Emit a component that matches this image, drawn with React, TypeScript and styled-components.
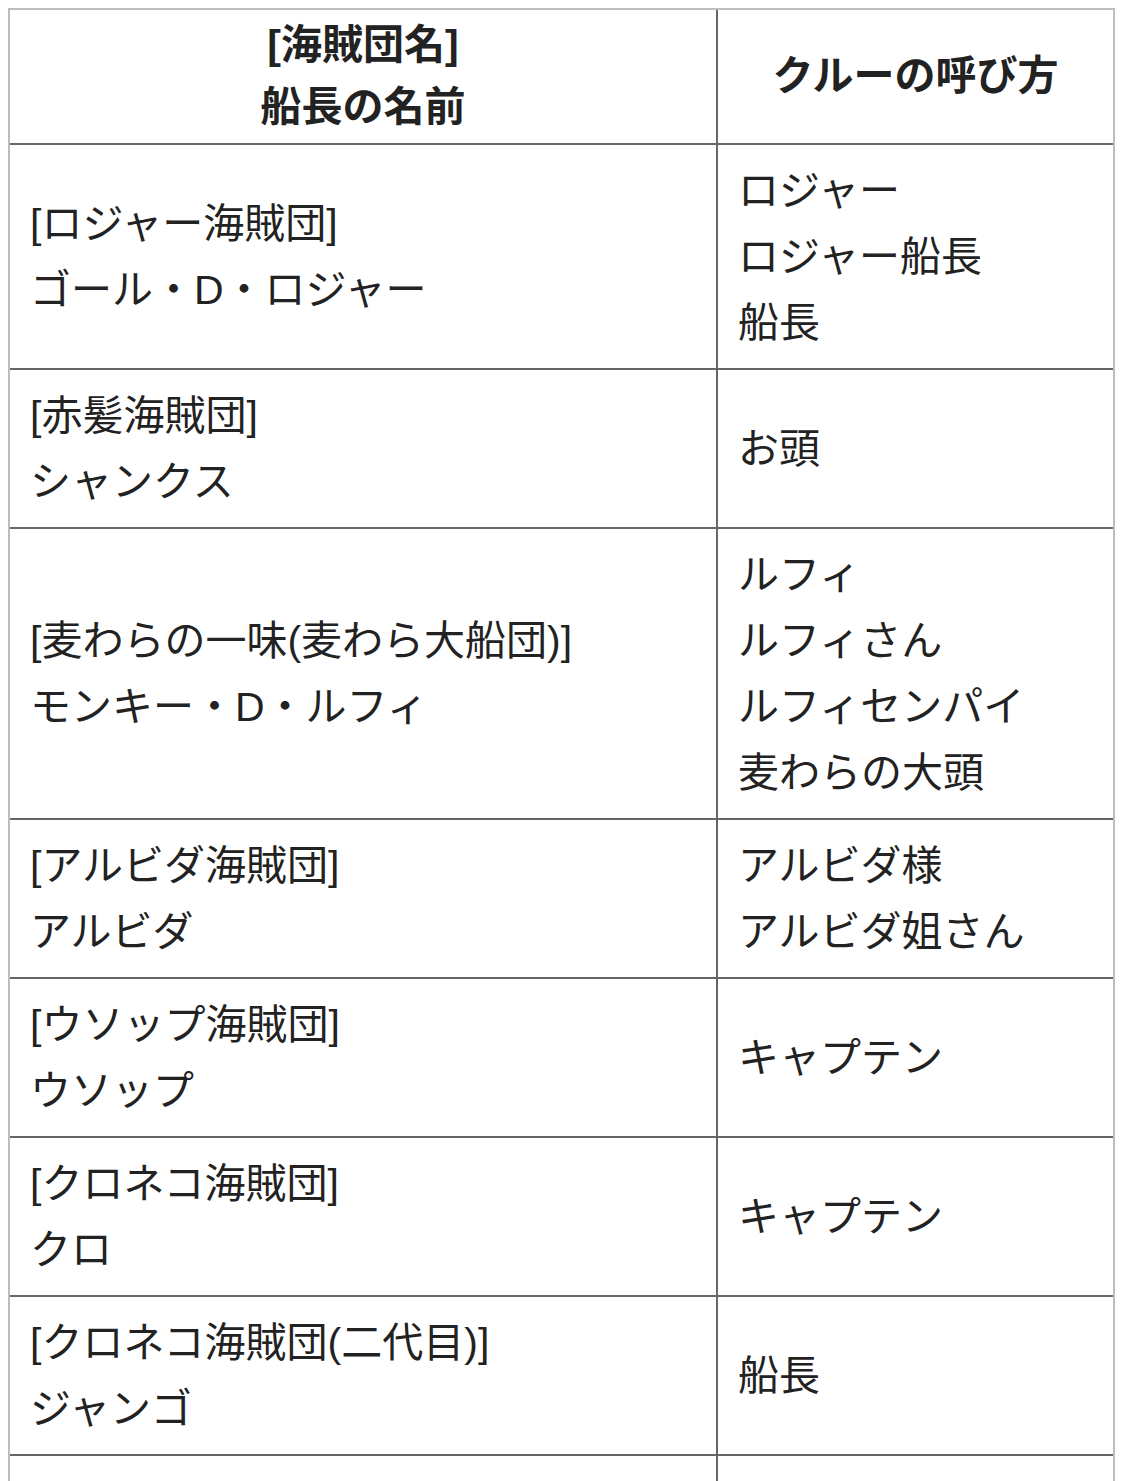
import React from "react"
import styled, { createGlobalStyle } from "styled-components"

const GlobalStyle = createGlobalStyle`
  body {
    margin: 8px;
    background: #fff;
    color: #222;
    font-family: "Liberation Sans", "Noto Sans CJK JP", sans-serif;
  }
`

const Table = styled.table`
  width: 1107px;
  border-collapse: separate;
  border-spacing: 0;
  border: 2px solid #bdbdbd;
  border-bottom: none;
  table-layout: fixed;
  font-size: 41px;
`

const HeadCell = styled.th`
  box-sizing: border-box;
  font-weight: 700;
  text-align: center;
  line-height: 62px;
  padding: 4px 20px 5px;
  border-bottom: 2px solid #666;
  border-right: ${props => (props.$last ? "none" : "2px solid #666")};
  width: ${props => props.$width || "auto"};
`

const Cell = styled.td`
  font-weight: 400;
  text-align: left;
  vertical-align: middle;
  line-height: 66px;
  padding: 12.5px 20px;
  border-bottom: 2px solid #666;
  border-right: ${props => (props.$last ? "none" : "2px solid #666")};
`

const Line = styled.div`
  white-space: nowrap;
`

interface IRow {
  crew: string
  captain: string
  calls: string[]
}

const rows: IRow[] = [
  { crew: "[ロジャー海賊団]", captain: "ゴール・D・ロジャー", calls: ["ロジャー", "ロジャー船長", "船長"] },
  { crew: "[赤髪海賊団]", captain: "シャンクス", calls: ["お頭"] },
  {
    crew: "[麦わらの一味(麦わら大船団)]",
    captain: "モンキー・D・ルフィ",
    calls: ["ルフィ", "ルフィさん", "ルフィセンパイ", "麦わらの大頭"]
  },
  { crew: "[アルビダ海賊団]", captain: "アルビダ", calls: ["アルビダ様", "アルビダ姐さん"] },
  { crew: "[ウソップ海賊団]", captain: "ウソップ", calls: ["キャプテン"] },
  { crew: "[クロネコ海賊団]", captain: "クロ", calls: ["キャプテン"] },
  { crew: "[クロネコ海賊団(二代目)]", captain: "ジャンゴ", calls: ["船長"] },
  { crew: "[バギー海賊団]", captain: "バギー", calls: ["キャプテン", "船長", "座長"] }
]

const App: React.FC = () => {
  return (
    <>
      <GlobalStyle />
      <Table>
        <thead>
          <tr>
            <HeadCell $width="708px">
              <Line>[海賊団名]</Line>
              <Line>船長の名前</Line>
            </HeadCell>
            <HeadCell $last>クルーの呼び方</HeadCell>
          </tr>
        </thead>
        <tbody>
          {rows.map(row => (
            <tr key={row.crew}>
              <Cell>
                <Line>{row.crew}</Line>
                <Line>{row.captain}</Line>
              </Cell>
              <Cell $last>
                {row.calls.map(call => (
                  <Line key={call}>{call}</Line>
                ))}
              </Cell>
            </tr>
          ))}
        </tbody>
      </Table>
    </>
  )
}

export default App
